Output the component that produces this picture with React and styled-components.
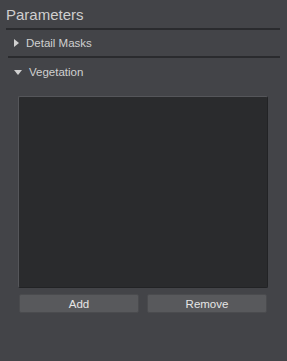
import styled, { createGlobalStyle } from "styled-components";

const GlobalStyle = createGlobalStyle`
  html, body {
    margin: 0;
    padding: 0;
    background: #434448;
  }
  body {
    font-family: "Liberation Sans", Arial, sans-serif;
  }
`;

const Panel = styled.div`
  width: 287px;
  height: 361px;
  background: #434448;
  color: #d2d2d2;
  box-sizing: border-box;
  padding: 4px 7px 0 8px;
`;

const Title = styled.div`
  font-family: "Liberation Sans", Arial, sans-serif;
  font-size: 15px;
  color: #cfcfcf;
  height: 26px;
  line-height: 22px;
  margin-left: -2px;
  border-bottom: 2px solid #2a2b2e;
  box-sizing: border-box;
`;

const Section = styled.div`
  height: 28px;
  display: flex;
  align-items: center;
  gap: 7px;
  padding-left: 6px;
  font-size: 11.5px;
  font-family: "Liberation Sans", Arial, sans-serif;
  color: #d0d0d0;
  box-sizing: border-box;
  border-bottom: ${(p) => (p.$divider ? "2px solid #2a2b2e" : "none")};
`;

const Arrow = styled.span`
  width: 0;
  height: 0;
  border-style: solid;
  ${(p) =>
    p.$open
      ? "border-width: 5px 4px 0 4px; border-color: #d0d0d0 transparent transparent transparent;"
      : "border-width: 4px 0 4px 5px; border-color: transparent transparent transparent #d0d0d0;"}
`;

const Body = styled.div`
  padding: 10px 12px 0 10px;
  display: flex;
  flex-direction: column;
  gap: 6px;
`;

const ListBox = styled.div`
  height: 190px;
  background: #2a2b2d;
  border: 1px solid #222325;
  border-left-color: #55565a;
  border-top-color: #55565a;
  border-radius: 2px;
`;

const Buttons = styled.div`
  display: grid;
  grid-template-columns: 1fr 1fr;
  gap: 8px;
  padding: 0 1px;
`;

const Button = styled.button`
  height: 19px;
  background: #58595c;
  border: 1px solid #4a4b4e;
  border-radius: 2px;
  color: #e6e6e6;
  font-family: "Liberation Sans", Arial, sans-serif;
  font-size: 11.5px;
  padding: 0;
`;

const App = () => {
  return (
    <>
      <GlobalStyle />
      <Panel>
        <Title>Parameters</Title>
        <Section $divider>
          <Arrow />
          Detail Masks
        </Section>
        <Section>
          <Arrow $open />
          Vegetation
        </Section>
        <Body>
          <ListBox />
          <Buttons>
            <Button>Add</Button>
            <Button>Remove</Button>
          </Buttons>
        </Body>
      </Panel>
    </>
  );
};

export default App;
